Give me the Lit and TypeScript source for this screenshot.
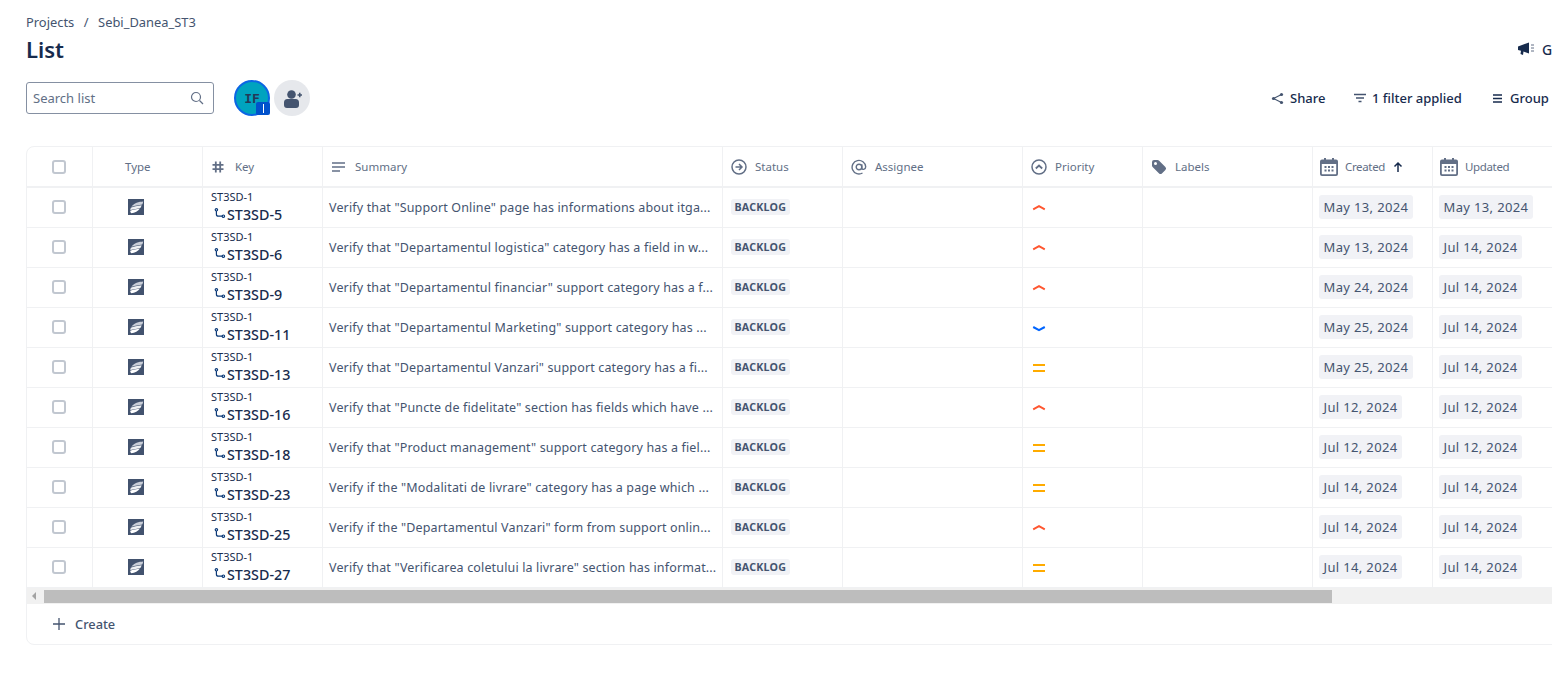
import { LitElement, html, css, svg } from "lit"
import { customElement } from "lit/decorators.js"

type Priority = "high" | "medium" | "low"

const rows: [string, string, Priority, string, string][] = [
  ["ST3SD-5", 'Verify that "Support Online" page has informations about itga...', "high", "May 13, 2024", "May 13, 2024"],
  ["ST3SD-6", 'Verify that "Departamentul logistica" category has a field in w...', "high", "May 13, 2024", "Jul 14, 2024"],
  ["ST3SD-9", 'Verify that "Departamentul financiar" support category has a f...', "high", "May 24, 2024", "Jul 14, 2024"],
  ["ST3SD-11", 'Verify that "Departamentul Marketing" support category has ...', "low", "May 25, 2024", "Jul 14, 2024"],
  ["ST3SD-13", 'Verify that "Departamentul Vanzari" support category has a fi...', "medium", "May 25, 2024", "Jul 14, 2024"],
  ["ST3SD-16", 'Verify that "Puncte de fidelitate" section has fields which have ...', "high", "Jul 12, 2024", "Jul 12, 2024"],
  ["ST3SD-18", 'Verify that "Product management" support category has a fiel...', "medium", "Jul 12, 2024", "Jul 12, 2024"],
  ["ST3SD-23", 'Verify if the "Modalitati de livrare" category has a page which ...', "medium", "Jul 14, 2024", "Jul 14, 2024"],
  ["ST3SD-25", 'Verify if the "Departamentul Vanzari" form from support onlin...', "high", "Jul 14, 2024", "Jul 14, 2024"],
  ["ST3SD-27", 'Verify that "Verificarea coletului la livrare" section has informat...', "medium", "Jul 14, 2024", "Jul 14, 2024"],
]

const wing = html`<svg width="16" height="16" viewBox="0 0 16 16">
  <rect width="16" height="16" fill="#42526e" />
  <path d="M15.200 2.400C11 2.600 5.800 3.800 3.400 7.800 7 6.800 11 6.600 14.200 5.600 14.700 4.700 15 3.600 15.200 2.400Z" fill="#c9ced8" />
  <path d="M13.600 6.300C10 7.100 5 7.500 2.800 8.800L2.200 11C5.800 10.100 9.600 9.900 12.600 8.800 13.100 8 13.400 7.100 13.600 6.300Z" fill="#eef0f3" />
  <path d="M12 9.500C8.600 10.400 5 10.600 2.200 11.700 2.200 12.800 2.600 13.700 3.400 14.200 6.800 14 10.200 12.200 12 9.500Z" fill="#ffffff" />
</svg>`

const subtask = html`<svg width="12" height="12" viewBox="0 0 12 12" fill="none" stroke="#0c3a78" stroke-width="1.200">
  <circle cx="2.400" cy="1.800" r="1.200" />
  <circle cx="9.400" cy="8.200" r="1.200" />
  <path d="M2.400 3V6.200C2.400 7.400 3.200 8.200 4.400 8.200H8.200" />
</svg>`

const calendar = html`<svg class="cal" width="18" height="18" viewBox="0 0 18 18">
  <path fill="#626f86" fill-rule="evenodd" d="M2 1.500h2V0h2v1.500h6V0h2v1.500h2a2 2 0 0 1 2 2V16a2 2 0 0 1-2 2H2a2 2 0 0 1-2-2V3.500a2 2 0 0 1 2-2ZM1.800 6V15.700c0 .3.200.5.500.5h13.400c.3 0 .5-.2.500-.5V6H1.800Z" />
  <path fill="#626f86" d="M4.500 8H6.500V10H4.500zM8 8h2v2H8zM11.500 8h2v2h-2zM4.500 11.500h2v2h-2zM8 11.500h2v2H8zM11.500 11.500h2v2h-2z" />
</svg>`

const priorityIcon = (p: Priority) => {
  const shapes = {
    high: svg`<path d="M1.200 9.300 7 6.200l5.800 3.100" fill="none" stroke="#ff5630" stroke-width="2" />`,
    low: svg`<path d="M1.200 7 7 10.200 12.800 7" fill="none" stroke="#0065ff" stroke-width="2" />`,
    medium: svg`<path d="M1 5h12M1 11h12" fill="none" stroke="#ffab00" stroke-width="2" />`,
  }
  return html`<svg width="14" height="14" viewBox="0 0 14 14">${shapes[p]}</svg>`
}

@customElement("app-root")
export class AppRoot extends LitElement {
  static styles = css`
    :host {
      display: block;
      height: 677px;
      overflow: hidden;
      background: #fff;
      color: #172b4d;
      font-family: "Noto Sans", "Open Sans", sans-serif;
    }

    svg {
      flex: none;
    }

    .page {
      padding: 14px 0 0 26px;
    }

    .crumbs {
      display: flex;
      gap: 9.500px;
      height: 16px;
      align-items: center;
      font-size: 12.900px;
      color: #44546f;
    }

    .title-row {
      display: flex;
      justify-content: space-between;
      align-items: center;
      height: 38px;
    }

    h1 {
      margin: 0;
      font-size: 22px;
      font-weight: 600;
      line-height: 38px;
    }

    .feedback {
      display: flex;
      align-items: center;
      gap: 7px;
      width: 35px;
      overflow: hidden;
      font-size: 14px;
      font-weight: 500;
      white-space: nowrap;
    }

    .toolbar {
      display: flex;
      align-items: center;
      justify-content: space-between;
      height: 36px;
      margin-top: 12px;
      white-space: nowrap;
    }

    .toolbar-left,
    .toolbar-right {
      display: flex;
      align-items: center;
    }

    .search {
      box-sizing: border-box;
      display: flex;
      align-items: center;
      justify-content: space-between;
      width: 188px;
      height: 32px;
      padding: 0 9px 0 6px;
      border: 1px solid #8590a2;
      border-radius: 3px;
      font-size: 13px;
      color: #626f86;
    }

    .avatar {
      position: relative;
      box-sizing: border-box;
      width: 36px;
      height: 36px;
      margin-left: 20px;
      border: 2px solid #0c66e4;
      border-radius: 50%;
      background: #00a3bf;
      display: flex;
      align-items: center;
      justify-content: center;
      font-family: "DejaVu Sans Mono", monospace;
      font-size: 13px;
      font-weight: 600;
      color: #253858;
    }

    .badge {
      position: absolute;
      right: -2px;
      bottom: -1px;
      width: 14px;
      height: 13px;
      border-radius: 2px;
      background: #0052cc;
      display: flex;
      align-items: center;
      justify-content: center;
    }

    .badge i {
      width: 1px;
      height: 9px;
      background: #fff;
    }

    .invite {
      width: 36px;
      height: 36px;
      margin-left: 4px;
      border-radius: 50%;
      background: #e6e8ec;
      display: flex;
      align-items: center;
      justify-content: center;
    }

    .invite svg {
      margin: 2px 0 0 2px;
    }

    .action {
      display: flex;
      align-items: center;
      gap: 6px;
      font-size: 13px;
      font-weight: 500;
      color: #172b4d;
    }

    .share {
      width: 70px;
      margin-right: 13px;
    }

    .filter {
      width: 122px;
      margin-right: 17px;
    }

    .group {
      width: 59px;
      gap: 8px;
    }

    .card {
      box-sizing: border-box;
      width: 1600px;
      height: 499px;
      margin-top: 30px;
      border: 1px solid #f0f1f3;
      border-radius: 8px;
      overflow: hidden;
    }

    .row {
      display: grid;
      grid-template-columns: 66px 110px 120px 400px 120px 180px 120px 170px 120px 215px;
      height: 40px;
      border-bottom: 1px solid #f0f1f3;
      box-sizing: border-box;
    }

    .row.head {
      height: 41px;
      border-bottom: 2px solid #f0f1f3;
    }

    .cell {
      display: flex;
      align-items: center;
      min-width: 0;
      box-sizing: border-box;
      padding-bottom: 1px;
      border-right: 1px solid #f0f1f3;
      font-size: 12.500px;
      color: #44546f;
    }

    .cell:last-child {
      border-right: 0;
    }

    .head .cell {
      gap: 8px;
      padding-left: 8px;
      padding-bottom: 0;
      font-size: 11.500px;
      color: #626f86;
    }

    .head .cell.type {
      padding-left: 32px;
    }

    .head .key-icon {
      margin-right: 2px;
    }

    .head .summary-icon {
      margin-right: 1px;
    }

    .head .cal {
      margin: 0 -1px 0 -1px;
    }

    .head .cal + span {
      letter-spacing: -0.35px;
    }

    .head .sort {
      margin-left: -1px;
    }

    .cell.center,
    .head .cell.center {
      justify-content: center;
      padding-left: 0;
    }

    .cell.type-icon {
      padding-left: 35px;
    }

    .box {
      box-sizing: border-box;
      width: 14px;
      height: 14px;
      margin-right: 2px;
      border: 2px solid #c1c7d0;
      border-radius: 3px;
    }

    .key {
      display: block;
      padding: 2px 0 0 8px;
    }

    .parent {
      font-size: 11px;
      line-height: 14px;
      color: #172b4d;
    }

    .issue {
      display: flex;
      align-items: center;
      gap: 1px;
      height: 20px;
      padding-left: 3px;
      font-size: 14.300px;
      font-weight: 500;
      color: #172b4d;
    }

    .summary {
      padding: 0 6px 1px;
    }

    .summary span {
      white-space: nowrap;
      letter-spacing: 0.15px;
    }

    .status {
      padding-left: 8px;
    }

    .lozenge {
      padding: 0 3.500px;
      height: 16px;
      line-height: 16px;
      border-radius: 3px;
      background: #f1f2f6;
      font-size: 10.700px;
      font-weight: 700;
      letter-spacing: 0.2px;
      color: #44546f;
    }

    .priority {
      padding-left: 9px;
    }

    .date {
      padding-left: 6px;
    }

    .date span {
      padding: 0 4.500px;
      height: 24px;
      line-height: 24px;
      border-radius: 3px;
      background: #f1f2f6;
      font-size: 13px;
      letter-spacing: 0.35px;
      color: #44546f;
      white-space: nowrap;
    }

    .scrollbar {
      display: flex;
      align-items: center;
      height: 16px;
      background: #f1f1f1;
    }

    .arrow {
      width: 0;
      height: 0;
      margin-left: 5px;
      border: 4px solid transparent;
      border-left: 0;
      border-right: 4px solid #a3a3a3;
    }

    .thumb {
      width: 1288px;
      height: 13px;
      margin-left: 8px;
      background: #bdbdbd;
    }

    .create {
      display: flex;
      align-items: center;
      gap: 9px;
      height: 40px;
      padding-left: 25px;
      font-size: 12.800px;
      font-weight: 500;
      color: #44546f;
    }
  `

  render() {
    return html`
      <div class="page">
        <div class="crumbs"><span>Projects</span><span>/</span><span>Sebi_Danea_ST3</span></div>
        <div class="title-row">
          <h1>List</h1>
          <div class="feedback">
            <svg width="18" height="16" viewBox="0 0 18 16">
              <path fill="#172b4d" d="M1 5.500 12 1.500v11L6.500 10.500 6 14 3.500 13 4 9.700 1 9Z" />
              <path stroke="#626f86" stroke-width="1" d="M14 4h3M14 7h3M14 10h3" />
            </svg>
            <span>Give feedback</span>
          </div>
        </div>
        <div class="toolbar">
          <div class="toolbar-left">
            <div class="search">
              <span>Search list</span>
              <svg width="14" height="14" viewBox="0 0 14 14" fill="none" stroke="#626f86" stroke-width="1.200">
                <circle cx="6" cy="6" r="4.500" />
                <path d="m9.500 9.500 3.500 3.500" />
              </svg>
            </div>
            <div class="avatar">IF<span class="badge"><i></i></span></div>
            <div class="invite">
              <svg width="18" height="18" viewBox="0 0 18 18" fill="#44546f">
                <circle cx="7.500" cy="4.500" r="4.300" />
                <path d="M0 12.500a3.500 3.500 0 0 1 3.500-3.500h8A3.500 3.500 0 0 1 15 12.500v2.500a3 3 0 0 1-3 3H3a3 3 0 0 1-3-3Z" />
                <path d="M13.500 5h4.500M15.750 2.800v4.400" stroke="#44546f" stroke-width="1.600" />
              </svg>
            </div>
          </div>
          <div class="toolbar-right">
            <div class="action share">
              <svg width="13" height="13" viewBox="0 0 13 13" fill="#44546f" stroke="#44546f">
                <path d="M10.500 2.500 2.500 6.500l8 4" fill="none" stroke-width="1.100" />
                <circle cx="10.500" cy="2.500" r="1.600" stroke="none" />
                <circle cx="2.500" cy="6.500" r="1.600" stroke="none" />
                <circle cx="10.500" cy="10.500" r="1.600" stroke="none" />
              </svg>
              <span>Share</span>
            </div>
            <div class="action filter">
              <svg width="12" height="10" viewBox="0 0 12 10" stroke="#44546f" stroke-width="1.300">
                <path d="M0 1.500h12M2 5h8M4.500 8.500h3" />
              </svg>
              <span>1 filter applied</span>
            </div>
            <div class="action group">
              <svg width="9" height="9" viewBox="0 0 9 9" stroke="#172b4d" stroke-width="1.300">
                <path d="M0 1h9M0 4.500h9M0 8h9" />
              </svg>
              <span>Group</span>
            </div>
          </div>
        </div>
        <div class="card">
          ${this.renderHead()}
          ${rows.map((r) => this.renderRow(r))}
          <div class="scrollbar"><span class="arrow"></span><span class="thumb"></span></div>
          <div class="create">
            <svg width="14" height="14" viewBox="0 0 14 14" stroke="#44546f" stroke-width="1.300">
              <path d="M1 7h12M7 1v12" />
            </svg>
            <span>Create</span>
          </div>
        </div>
      </div>
    `
  }

  private renderHead() {
    return html`
      <div class="row head">
        <div class="cell center"><span class="box"></span></div>
        <div class="cell type">Type</div>
        <div class="cell">
          <svg class="key-icon" width="14" height="14" viewBox="0 0 14 14" stroke="#626f86" stroke-width="1.800">
            <path d="M4.800 1.500v11M9.200 1.500v11M1.500 4.800h11M1.500 9.200h11" />
          </svg>
          Key
        </div>
        <div class="cell">
          <svg class="summary-icon" width="15" height="12" viewBox="0 0 15 12" stroke="#626f86" stroke-width="1.500">
            <path d="M1 2h13M1 6h13M1 10h8" />
          </svg>
          Summary
        </div>
        <div class="cell">
          <svg width="16" height="16" viewBox="0 0 16 16" fill="none" stroke="#626f86" stroke-width="1.500">
            <circle cx="8" cy="8" r="7" />
            <path d="M4.500 8h6M8 5l3 3-3 3" />
          </svg>
          Status
        </div>
        <div class="cell">
          <svg width="16" height="16" viewBox="0 0 16 16" fill="none" stroke="#626f86" stroke-width="1.400">
            <circle cx="8" cy="8" r="2.800" />
            <path d="M10.800 5.200v3.600c0 2.400 3.900 2 3.900-1A6.800 6.800 0 1 0 11.500 14" />
          </svg>
          Assignee
        </div>
        <div class="cell">
          <svg width="16" height="16" viewBox="0 0 16 16" fill="none" stroke="#626f86" stroke-width="1.500">
            <circle cx="8" cy="8" r="7" />
            <path d="M4.800 9.500 8 6.500l3.200 3" stroke-width="1.800" />
          </svg>
          Priority
        </div>
        <div class="cell">
          <svg width="16" height="16" viewBox="0 0 16 16">
            <path fill="#626f86" fill-rule="evenodd" d="M1 3a2 2 0 0 1 2-2h3.500c.5 0 1 .2 1.400.6l6.500 6.500a2 2 0 0 1 0 2.800l-3.500 3.500a2 2 0 0 1-2.800 0L1.600 7.900C1.200 7.500 1 7 1 6.500ZM4.500 6a1.500 1.500 0 1 0 0-3 1.500 1.500 0 0 0 0 3Z" />
          </svg>
          Labels
        </div>
        <div class="cell">
          ${calendar}
          <span>Created</span>
          <svg class="sort" width="12" height="12" viewBox="0 0 12 12" fill="none" stroke="#172b4d" stroke-width="1.500">
            <path d="M6 11V2M2.500 5.500 6 2l3.500 3.500" />
          </svg>
        </div>
        <div class="cell">${calendar}<span>Updated</span></div>
      </div>
    `
  }

  private renderRow([key, summary, priority, created, updated]: (typeof rows)[number]) {
    return html`
      <div class="row">
        <div class="cell center"><span class="box"></span></div>
        <div class="cell type-icon">${wing}</div>
        <div class="cell key">
          <div class="parent">ST3SD-1</div>
          <div class="issue">${subtask}<span>${key}</span></div>
        </div>
        <div class="cell summary"><span>${summary}</span></div>
        <div class="cell status"><span class="lozenge">BACKLOG</span></div>
        <div class="cell"></div>
        <div class="cell priority">${priorityIcon(priority)}</div>
        <div class="cell"></div>
        <div class="cell date"><span>${created}</span></div>
        <div class="cell date"><span>${updated}</span></div>
      </div>
    `
  }
}
